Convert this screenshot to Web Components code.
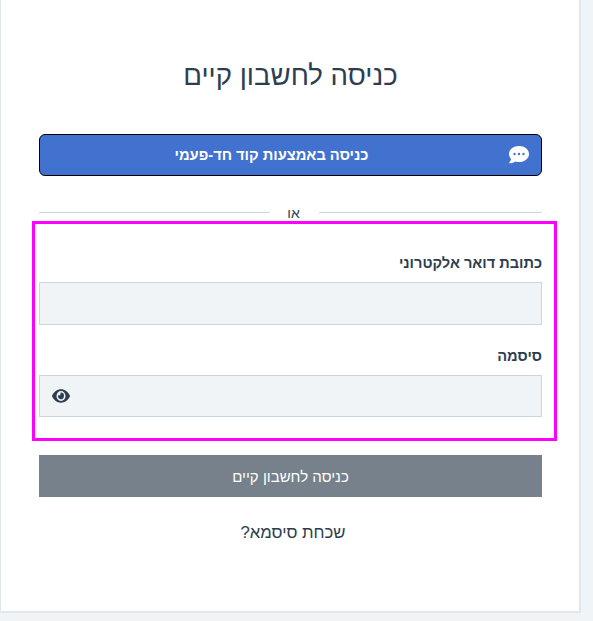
<!DOCTYPE html>
<html lang="he" dir="rtl">
<head>
<meta charset="utf-8">
<title>כניסה לחשבון קיים</title>
<style>
html, body { margin: 0; height: 621px; overflow: hidden; }
body {
	background: #f0f4f7;
	color: #2d3e50;
	font-family: "Liberation Sans", Arial, sans-serif;
}
</style>
</head>
<body>
<login-card>
	<otp-button>כניסה באמצעות קוד חד-פעמי</otp-button>
	<or-divider>או</or-divider>
	<login-fields>
		<text-field label="כתובת דואר אלקטרוני"></text-field>
		<text-field label="סיסמה" password></text-field>
	</login-fields>
	<submit-button>כניסה לחשבון קיים</submit-button>
	<forgot-link>שכחת סיסמא?</forgot-link>
</login-card>

<script>
class LoginCard extends HTMLElement {
	constructor() {
		super();
		this.attachShadow({ mode: 'open' });
		this.shadowRoot.innerHTML = `
		<style>
		:host {
			display: block;
			box-sizing: border-box;
			width: 581px;
			height: 613px;
			margin-right: 12px;
			padding: 0 37px 0 38px;
			background: #fff;
			border-left: 1px solid #e2e7ec;
			border-right: 2px solid #e2e7ec;
			border-bottom: 2px solid #e2e7ec;
		}
		h1 {
			margin: 0;
			padding-top: 59px;
			height: 75px;
			line-height: 34px;
			font-size: 27.6px;
			font-weight: 400;
			text-align: center;
		}
		</style>
		<h1>כניסה לחשבון קיים</h1>
		<slot></slot>
		`;
	}
}

class OtpButton extends HTMLElement {
	constructor() {
		super();
		this.attachShadow({ mode: 'open' });
		this.shadowRoot.innerHTML = `
		<style>
		:host {
			display: flex;
			align-items: center;
			box-sizing: border-box;
			height: 42px;
			padding: 0 11px;
			background: #4272d0;
			border: 1px solid #000;
			border-radius: 6px;
			color: #fff;
			font-size: 14.7px;
			font-weight: 700;
		}
		svg { flex: none; display: block; width: 22px; height: 20px; }
		.label { flex: 1; text-align: center; padding-right: 16px; }
		</style>
		<svg viewBox="0 0 22 20" aria-hidden="true">
			<path fill="#fff" d="M11 1C5.500 1 1 4.500 1 8.900c0 1.900.8 3.600 2.200 5-.5 2-2.100 3.700-2.100 3.800-.1.100-.1.300 0 .4.100.1.200.2.300.2 2.500 0 4.500-1 5.800-1.900 1.200.4 2.500.6 3.800.6 5.500 0 10-3.600 10-8.100S16.500 1 11 1z"/>
			<circle cx="6.500" cy="9" r="1.200" fill="#4272d0"/>
			<circle cx="11" cy="9" r="1.200" fill="#4272d0"/>
			<circle cx="15.500" cy="9" r="1.200" fill="#4272d0"/>
		</svg>
		<span class="label"><slot></slot></span>
		`;
	}
}

class OrDivider extends HTMLElement {
	constructor() {
		super();
		this.attachShadow({ mode: 'open' });
		this.shadowRoot.innerHTML = `
		<style>
		:host {
			display: flex;
			align-items: flex-start;
			height: 45px;
			margin-top: 36px;
			box-sizing: border-box;
			font-size: 14px;
			line-height: 16px;
		}
		i { height: 1px; background: #c9d6e3; }
		.near { flex: none; width: 223px; }
		.far { flex: 1; }
		span { width: 49px; padding-right: 2px; box-sizing: border-box; text-align: center; color: #2d3e50; margin-top: -7px; }
		</style>
		<i class="near"></i><span><slot></slot></span><i class="far"></i>
		`;
	}
}

class LoginFields extends HTMLElement {
	constructor() {
		super();
		this.attachShadow({ mode: 'open' });
		this.shadowRoot.innerHTML = `
		<style>
		:host {
			display: block;
			box-sizing: border-box;
			height: 220px;
			margin: -36px -15px 0 -7px;
			padding: 27.4px 12px 0 4px;
			border: 3px solid #ff00ff;
		}
		</style>
		<slot></slot>
		`;
	}
}

class TextField extends HTMLElement {
	constructor() {
		super();
		this.attachShadow({ mode: 'open' });
		const eye = this.hasAttribute('password') ? `
			<svg viewBox="0 0 576 512" preserveAspectRatio="none" aria-hidden="true">
				<path fill="#2d3e50" d="M572.500 241.400C518.300 135.600 410.900 64 288 64S57.700 135.600 3.500 241.400a32.400 32.400 0 0 0 0 29.200C57.700 376.400 165.100 448 288 448s230.300-71.600 284.500-177.400a32.400 32.400 0 0 0 0-29.200zM288 400a144 144 0 1 1 144-144 143.900 143.900 0 0 1-144 144zm0-240a95.300 95.300 0 0 0-25.300 3.800 47.900 47.900 0 0 1-66.900 66.900A95.800 95.800 0 1 0 288 160z"/>
			</svg>` : '';
		this.shadowRoot.innerHTML = `
		<style>
		:host { display: block; margin-bottom: 19.2px; }
		label {
			display: block;
			height: 31px;
			font-size: 14.6px;
			line-height: 24px;
			font-weight: 700;
			color: #2d3e50;
		}
		.box {
			display: flex;
			align-items: center;
			justify-content: flex-end;
			box-sizing: border-box;
			height: 42.4px;
			padding: 0 12px;
			background: #f0f4f7;
			border: 1px solid #c9d6e3;
		}
		svg { display: block; width: 18px; height: 18px; }
		</style>
		<label>${this.getAttribute('label')}</label>
		<div class="box">${eye}</div>
		`;
	}
}

class SubmitButton extends HTMLElement {
	constructor() {
		super();
		this.attachShadow({ mode: 'open' });
		this.shadowRoot.innerHTML = `
		<style>
		:host {
			display: flex;
			align-items: center;
			justify-content: center;
			height: 42px;
			margin-top: 14px;
			background: #76818c;
			color: #fff;
			font-size: 15px;
		}
		</style>
		<slot></slot>
		`;
	}
}

class ForgotLink extends HTMLElement {
	constructor() {
		super();
		this.attachShadow({ mode: 'open' });
		this.shadowRoot.innerHTML = `
		<style>
		:host {
			display: block;
			margin-top: 25px;
			padding-left: 5px;
			line-height: 22px;
			text-align: center;
			font-size: 16.7px;
			color: #2d3e50;
		}
		</style>
		<slot></slot>
		`;
	}
}

customElements.define('login-card', LoginCard);
customElements.define('otp-button', OtpButton);
customElements.define('or-divider', OrDivider);
customElements.define('login-fields', LoginFields);
customElements.define('text-field', TextField);
customElements.define('submit-button', SubmitButton);
customElements.define('forgot-link', ForgotLink);
</script>
</body>
</html>
